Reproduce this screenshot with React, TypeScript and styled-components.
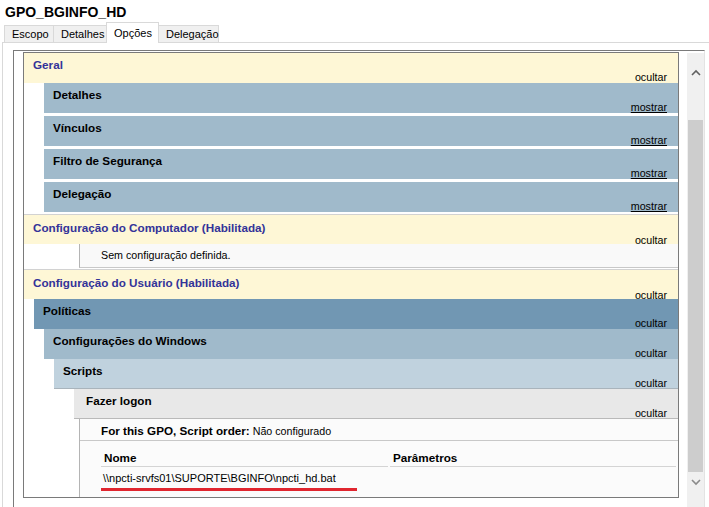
import React from "react";
import styled, { createGlobalStyle } from "styled-components";

const GlobalStyle = createGlobalStyle`
  html, body { margin: 0; padding: 0; background: #ffffff; }
  body { font-family: "Liberation Sans", Arial, sans-serif; font-size: 10.7px; color: #000; }
  #root { width: 709px; height: 507px; overflow: hidden; }
`;

const Window = styled.div`
  width: 709px;
  height: 507px;
  display: flex;
  flex-direction: column;
  background: #fff;
  overflow: hidden;
`;

const GpoTitle = styled.h1`
  margin: 0;
  height: 22px;
  box-sizing: border-box;
  padding: 4px 0 0 5px;
  font: bold 14px/16px "Liberation Sans", Arial, sans-serif;
  color: #000;
`;

const TabStrip = styled.div`
  display: flex;
  align-items: flex-end;
  height: 20px;
  padding-left: 4px;
  position: relative;
  z-index: 1;
`;

const Tab = styled.div<{ $w: number; $active?: boolean }>`
  box-sizing: border-box;
  width: ${(p) => p.$w}px;
  height: ${(p) => (p.$active ? 21 : 17)}px;
  margin-right: -1px;
  margin-bottom: ${(p) => (p.$active ? -1 : 0)}px;
  border: 1px solid #d9d9d9;
  border-bottom: none;
  background: ${(p) => (p.$active ? "#ffffff" : "#f0f0f0")};
  padding-left: 7px;
  display: flex;
  align-items: center;
  font-size: 11px;
  color: #000;
  position: relative;
  z-index: ${(p) => (p.$active ? 2 : 1)};
`;

const TabPage = styled.div`
  flex: 1;
  min-height: 0;
  margin-left: 2px;
  border-left: 1px solid #d9d9d9;
  border-top: 1px solid #d9d9d9;
  padding: 7px 0 0 10px;
  display: flex;
`;

const Viewer = styled.div`
  box-sizing: border-box;
  width: 692px;
  border-top: 1px solid #7a7a7a;
  border-left: 1px solid #7a7a7a;
  border-right: 1px solid #e3e3e3;
  padding: 1px 0 0 9px;
  display: flex;
  align-items: flex-start;
`;

const Doc = styled.div`
  box-sizing: border-box;
  width: 656px;
  height: 446px;
  border: 1px solid #7a7a7a;
  overflow: hidden;
  display: flex;
  flex-direction: column;
  background: #fff;
`;

const Header = styled.div<{
  $bg: string;
  $indent: number;
  $pad?: number;
  $gap?: number;
  $topRule?: boolean;
  $bottomRule?: string;
}>`
  box-sizing: border-box;
  flex: none;
  height: 30px;
  margin-left: ${(p) => p.$indent}px;
  margin-top: ${(p) => p.$gap ?? 0}px;
  padding: ${(p) => (p.$topRule ? 6 : 5)}px 11px 0 ${(p) => p.$pad ?? 9}px;
  background: ${(p) => p.$bg};
  border-top: ${(p) => (p.$topRule ? "1px solid #d2d2d2" : "none")};
  border-bottom: ${(p) => (p.$bottomRule ? `1px solid ${p.$bottomRule}` : "none")};
  display: flex;
  flex-direction: column;
`;

const HeaderTitle = styled.span<{ $accent?: boolean }>`
  font-weight: bold;
  font-size: 11.7px;
  line-height: 13px;
  white-space: nowrap;
  color: ${(p) => (p.$accent ? "#333399" : "#000")};
`;

const Toggle = styled.span<{ $link?: boolean }>`
  align-self: flex-end;
  line-height: 13px;
  color: #000;
  text-decoration: ${(p) => (p.$link ? "underline" : "none")};
`;

const InfoBox = styled.div<{ $indent: number }>`
  box-sizing: border-box;
  flex: none;
  height: 24px;
  margin-left: ${(p) => p.$indent}px;
  border-left: 1px solid #b4b4b4;
  border-bottom: 1px solid #c8c8c8;
  background: #f9f9f9;
  padding-left: 21px;
  line-height: 23px;
`;

const Container = styled.div<{ $indent: number }>`
  flex: 1;
  margin-left: ${(p) => p.$indent}px;
  border-left: 1px solid #b4b4b4;
  background: #fbfbfb;
  display: flex;
  flex-direction: column;
`;

const OrderRow = styled.div`
  height: 22px;
  box-sizing: border-box;
  border-bottom: 1px solid #c8c8c8;
  padding: 5px 0 0 21px;
  line-height: 13px;
  flex: none;
`;

const Strong = styled.b`
  font-weight: bold;
  font-size: 11.7px;
`;

const ScriptTable = styled.div`
  margin-left: 21px;
  display: grid;
  grid-template-columns: 287px 286px;
  column-gap: 2px;
`;

const HeadCell = styled.div`
  box-sizing: border-box;
  height: 26px;
  border-bottom: 1px solid #d4d4d4;
  padding: 0 0 2px 3px;
  display: flex;
  align-items: flex-end;
  font-weight: bold;
  font-size: 11.7px;
  line-height: 13px;
`;

const Cell = styled.div`
  padding-top: 5px;
  line-height: 13px;
`;

const Marked = styled.span`
  display: inline-block;
  box-sizing: border-box;
  width: 256px;
  padding: 0 0 3px 2px;
  border-bottom: 3px solid #e0262f;
  white-space: nowrap;
  font-size: 11px;
`;

const ScrollBar = styled.div`
  width: 17px;
  height: 455px;
  margin-left: 8px;
  margin-top: 1px;
  background: #f0f0f0;
  display: flex;
  flex-direction: column;
  padding-top: 11px;
  box-sizing: border-box;
`;

const Arrow = styled.div`
  height: 17px;
  display: flex;
  align-items: center;
  justify-content: center;
  flex: none;
`;

const Track = styled.div`
  height: 393px;
  flex: none;
  display: flex;
  flex-direction: column;
  align-items: center;
`;

const Thumb = styled.div`
  width: 15px;
  background: #cdcdcd;
`;

const sections = ["Detalhes", "Vínculos", "Filtro de Segurança", "Delegação"];

export default function App() {
  const thumbTop = 39;
  const thumbHeight = 352;
  return (
    <Window>
      <GlobalStyle />
      <GpoTitle>GPO_BGINFO_HD</GpoTitle>
      <TabStrip>
        <Tab $w={50}>Escopo</Tab>
        <Tab $w={54}>Detalhes</Tab>
        <Tab $w={53} $active>Opções</Tab>
        <Tab $w={61}>Delegação</Tab>
      </TabStrip>
      <TabPage>
        <Viewer>
          <Doc>
            <Header $bg="#FEF7D6" $indent={0}>
              <HeaderTitle $accent>Geral</HeaderTitle>
              <Toggle>ocultar</Toggle>
            </Header>
            {sections.map((s, i) => (
              <Header key={s} $bg="#A0BACB" $indent={20} $gap={i === 0 ? 0 : 3}>
                <HeaderTitle>{s}</HeaderTitle>
                <Toggle $link>mostrar</Toggle>
              </Header>
            ))}
            <Header $bg="#FEF7D6" $indent={0} $gap={2} $topRule>
              <HeaderTitle $accent>Configuração do Computador (Habilitada)</HeaderTitle>
              <Toggle>ocultar</Toggle>
            </Header>
            <InfoBox $indent={55}>Sem configuração definida.</InfoBox>
            <Header $bg="#FEF7D6" $indent={0} $gap={1} $topRule>
              <HeaderTitle $accent>Configuração do Usuário (Habilitada)</HeaderTitle>
              <Toggle>ocultar</Toggle>
            </Header>
            <Header $bg="#7197B3" $indent={10}>
              <HeaderTitle>Políticas</HeaderTitle>
              <Toggle>ocultar</Toggle>
            </Header>
            <Header $bg="#A0BACB" $indent={20}>
              <HeaderTitle>Configurações do Windows</HeaderTitle>
              <Toggle>ocultar</Toggle>
            </Header>
            <Header $bg="#C0D2DE" $indent={30} $bottomRule="#a9b4bc">
              <HeaderTitle>Scripts</HeaderTitle>
              <Toggle>ocultar</Toggle>
            </Header>
            <Header $bg="#E8E8E8" $indent={50} $pad={12} $bottomRule="#b9b9b9">
              <HeaderTitle>Fazer logon</HeaderTitle>
              <Toggle>ocultar</Toggle>
            </Header>
            <Container $indent={55}>
              <OrderRow>
                <Strong>For this GPO, Script order:</Strong> Não configurado
              </OrderRow>
              <ScriptTable>
                <HeadCell>Nome</HeadCell>
                <HeadCell>Parâmetros</HeadCell>
                <Cell>
                  <Marked>\\npcti-srvfs01\SUPORTE\BGINFO\npcti_hd.bat</Marked>
                </Cell>
                <Cell />
              </ScriptTable>
            </Container>
          </Doc>
          <ScrollBar>
            <Arrow>
              <svg width="10" height="7" viewBox="0 0 10 7">
                <polyline points="1,6 5,2 9,6" fill="none" stroke="#606060" strokeWidth="1.6" />
              </svg>
            </Arrow>
            <Track>
              <Thumb style={{ marginTop: thumbTop, height: thumbHeight }} />
            </Track>
            <Arrow>
              <svg width="10" height="7" viewBox="0 0 10 7">
                <polyline points="1,1 5,5 9,1" fill="none" stroke="#8a8a8a" strokeWidth="1.6" />
              </svg>
            </Arrow>
          </ScrollBar>
        </Viewer>
      </TabPage>
    </Window>
  );
}
